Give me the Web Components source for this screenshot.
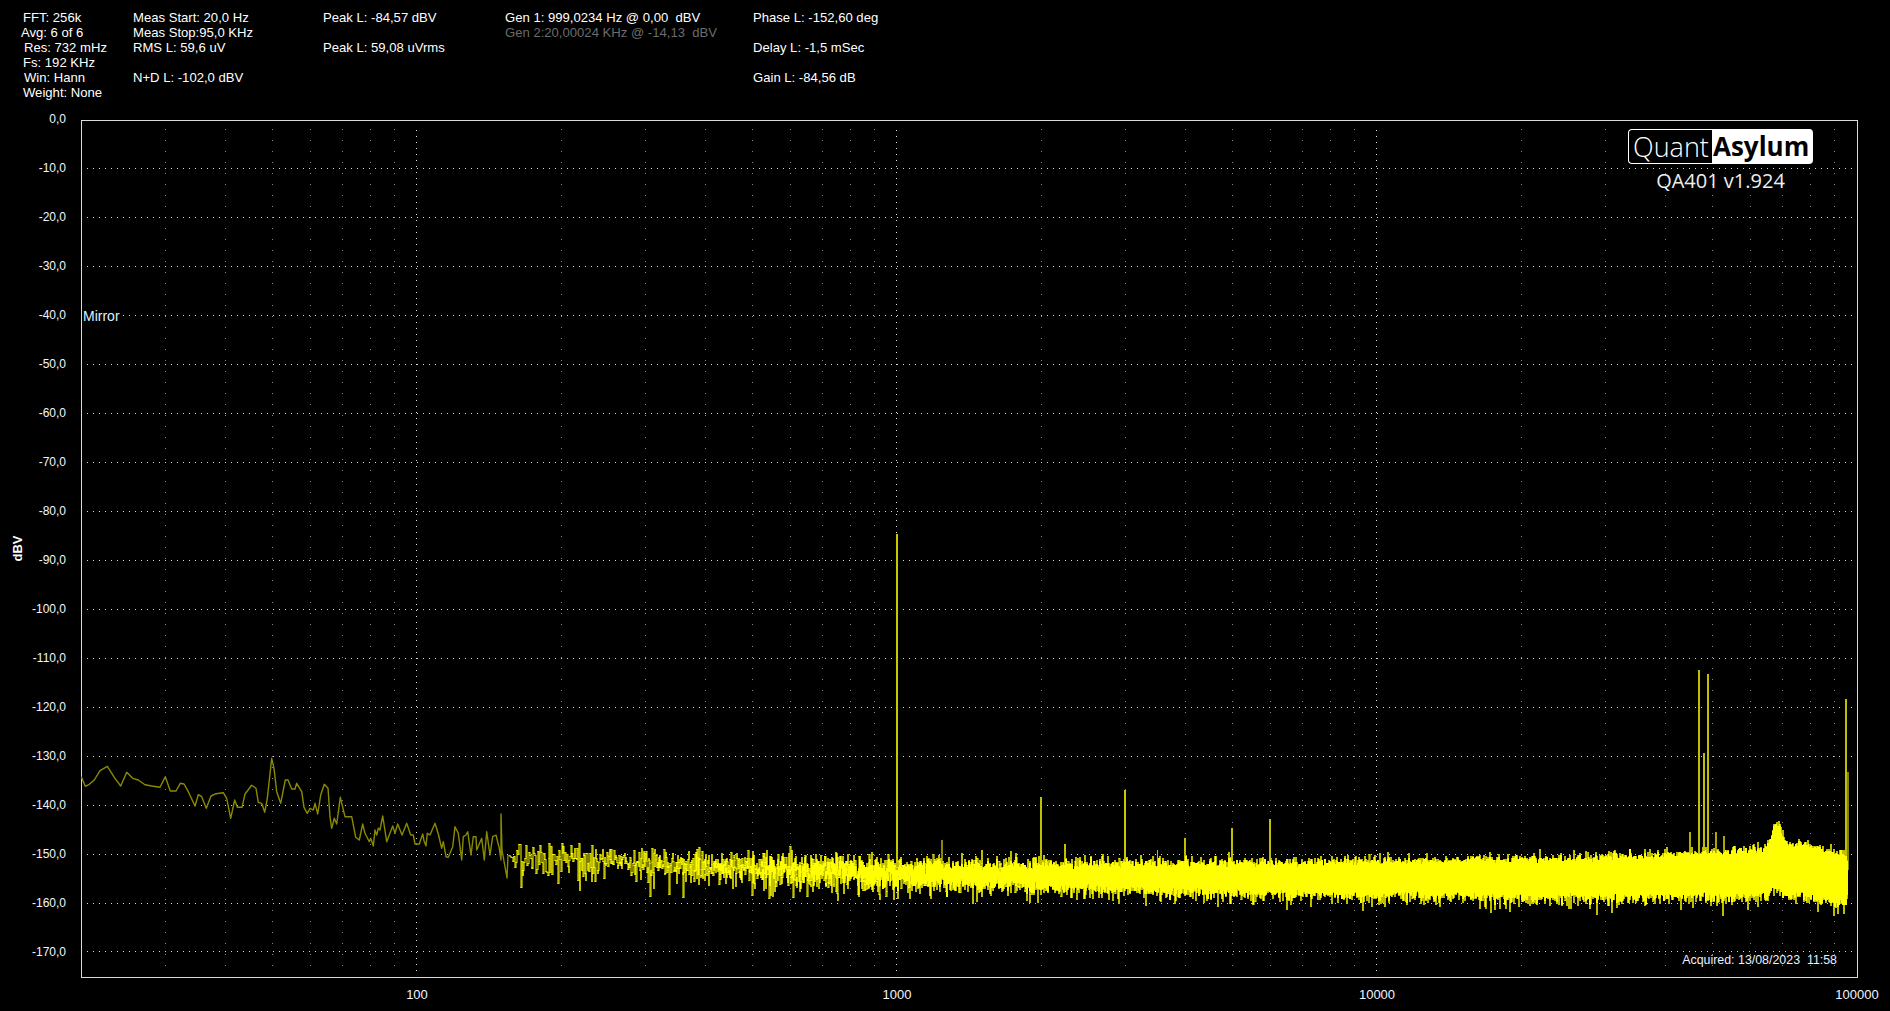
<!DOCTYPE html>
<html lang="en">
<head>
<meta charset="utf-8">
<title>QA401</title>
<style>
  html, body { margin: 0; background: #000; overflow: hidden; }
  body { width: 1890px; height: 1011px; color: #fff; font-family: "Liberation Sans", Arial, sans-serif; }
  .dim { color: #6c6c6c; }
</style>
</head>
<body>
<qa-readouts>
  <qa-column width="112">
    <div style="padding-left:2px">FFT: 256k</div>
    <div>Avg: 6 of 6</div>
    <div style="padding-left:3px">Res: 732 mHz</div>
    <div style="padding-left:2px">Fs: 192 KHz</div>
    <div style="padding-left:3px">Win: Hann</div>
    <div style="padding-left:2px">Weight: None</div>
  </qa-column>
  <qa-column width="190">
    <div>Meas Start: 20,0 Hz</div>
    <div>Meas Stop:95,0 KHz</div>
    <div>RMS L: 59,6 uV</div>
    <div>&nbsp;</div>
    <div>N+D L: -102,0 dBV</div>
  </qa-column>
  <qa-column width="182">
    <div>Peak L: -84,57 dBV</div>
    <div>&nbsp;</div>
    <div>Peak L: 59,08 uVrms</div>
  </qa-column>
  <qa-column width="248">
    <div>Gen 1: 999,0234 Hz @ 0,00  dBV</div>
    <div class="dim">Gen 2:20,00024 KHz @ -14,13  dBV</div>
  </qa-column>
  <qa-column width="200">
    <div>Phase L: -152,60 deg</div>
    <div>&nbsp;</div>
    <div>Delay L: -1,5 mSec</div>
    <div>&nbsp;</div>
    <div>Gain L: -84,56 dB</div>
  </qa-column>
</qa-readouts>
<qa-chart>
  <qa-logo slot="overlay"></qa-logo>
</qa-chart>

<script>
class QaColumn extends HTMLElement {
  constructor() {
    super();
    this.attachShadow({ mode: 'open' });
    this.shadowRoot.innerHTML = `
      <style>
        :host { display: block; flex: none; font-size: 13.1px; line-height: 15px; }
        ::slotted(div) { white-space: pre; }
      </style>
      <slot></slot>
    `;
  }
  connectedCallback() {
    this.style.width = this.getAttribute('width') + 'px';
  }
}
customElements.define('qa-column', QaColumn);

class QaReadouts extends HTMLElement {
  constructor() {
    super();
    this.attachShadow({ mode: 'open' });
    this.shadowRoot.innerHTML = `
      <style>
        :host { display: flex; box-sizing: border-box; height: 120px; padding: 10px 0 0 21px; }
      </style>
      <slot></slot>
    `;
  }
}
customElements.define('qa-readouts', QaReadouts);

class QaLogo extends HTMLElement {
  constructor() {
    super();
    this.attachShadow({ mode: 'open' });
    this.shadowRoot.innerHTML = `
      <style>
        :host { display: flex; flex-direction: column; align-items: center; width: 185px; }
        .mark { display: flex; height: 35px; width: 185px; font-family: "Open Sans", sans-serif; font-size: 26px; line-height: 33px; }
        .quant { box-sizing: border-box; width: 84px; background: #000; color: #fff; font-weight: 300; font-size: 27px;
                 border: 1px solid #fff; border-right: 0; border-radius: 4px 0 0 4px; padding-left: 4px; }
        .asylum { flex: 1; background: #fff; color: #000; font-weight: 700; border-radius: 0 4px 4px 0;
                  padding-left: 1px; line-height: 35px; }
        .version { margin-top: 4px; color: #eee; font-family: "Open Sans", sans-serif; font-size: 20px; line-height: 26px; white-space: nowrap; }
      </style>
      <div class="mark"><span class="quant">Quant</span><span class="asylum">Asylum</span></div>
      <div class="version">QA401 v1.924</div>
    `;
  }
}
customElements.define('qa-logo', QaLogo);

// page coordinates of the plot box, the svg viewBox uses them directly
const LEFT = 81.5, TOP = 120;
const PX_PER_DB = 4.894, PX_PER_DECADE = 480;
const xOf = (f) => LEFT + PX_PER_DECADE * Math.log10(f / 20);
const yOf = (db) => TOP + PX_PER_DB * -db;

function rng(seed) {
  return () => {
    seed |= 0; seed = seed + 0x6D2B79F5 | 0;
    let t = Math.imul(seed ^ seed >>> 15, 1 | seed);
    t = t + Math.imul(t ^ t >>> 7, 61 | t) ^ t;
    return ((t ^ t >>> 14) >>> 0) / 4294967296;
  };
}

function dotsPath() {
  const major = [], minor = [], rows = [];
  for (let db = -10; db >= -170; db -= 10) {
    const y = Math.round(yOf(db) - 0.5);
    for (let x = 87; x < 1852; x += 6) rows.push(`M${x} ${y}h1v1h-1z`);
  }
  for (const decade of [10, 100, 1000, 10000]) {
    for (let k = 1; k <= 9; k++) {
      const f = decade * k;
      if (f <= 20) continue;
      const x = Math.floor(xOf(f) - 0.4);
      if (k === 1) {
        for (let y = 130; y < 972; y += 6) major.push(`M${x} ${y}h1v1h-1z`);
      } else {
        for (let y = 129; y < 970; y += 11) minor.push(`M${x} ${y}h1v1h-1z`);
      }
    }
  }
  return { major: major.join(''), minor: minor.join(''), rows: rows.join('') };
}

// read off the reference: zoomed x,y of the low frequency part of the trace
const LOW = [244,170,256,199,268,193,283,180,300,152,322,139,345,175,362,198,380,157,398,175,415,180,435,194,455,198,480,202,
  496,170,511,213,528,213,541,190,552,192,565,215,585,258,595,224,605,230,619,265,633,228,648,221,670,218,680,235,692,295,
  704,240,712,262,726,262,735,222,755,196,768,205,775,247,785,250,794,277,802,235,815,115,822,145,830,215,842,250,856,180,
  864,180,875,207,885,207,890,190,905,215,912,262,922,280,930,265,940,270,945,250,953,282,962,225,973,193,984,205,990,290,
  995,325,1003,295,1010,312,1021,232,1035,290,1055,290,1067,352,1078,360,1088,312,1095,340,1108,365,1112,355,1120,378,
  1125,330,1130,345,1135,325,1140,330,1148,288,1160,365,1178,318,1185,340,1193,312,1206,345,1220,310,1232,345,1240,345,
  1245,372,1258,372,1268,342,1272,362,1278,378,1282,340,1290,345,1305,310,1315,342,1325,385,1330,365,1338,410,1345,412,
  1358,380,1365,320,1375,340,1385,420,1390,350,1398,345,1403,335,1413,405,1420,350,1428,350,1430,390,1445,355,1453,420,
  1460,335,1470,405,1478,350,1488,345,1498,385];

function lowPath() {
  let d = '';
  for (let i = 0; i < LOW.length; i += 2) {
    d += (i ? 'L' : 'M') + (LOW[i] / 3).toFixed(1) + ' ' + (720 + LOW[i + 1] / 3).toFixed(1);
  }
  return d + 'L501 860L501 814L502 850L507 878L508 855';
}

const XS =    [ 505, 600, 700, 800, 897,1000,1100,1300,1500,1620,1700,1760,1800,1845,1848];
const FLOOR = [ 857, 860, 865, 868, 872, 874, 876, 877, 877, 876, 874, 872, 870, 877, 878];
const LIFT =  [   1,   1,   1,   1,   1,   1,   1,   1,   1,   1, 1.1,1.15, 1.3,1.05,   1];
const DROP =  [   1,   1,   1, .95,  .9,  .8, .78, .75, .72, .72, .72, .72, .75,  .8,  .8];

function lerpTable(table, x) {
  let i = 0;
  while (i < XS.length - 2 && x > XS[i + 1]) i++;
  const t = Math.min(1, Math.max(0, (x - XS[i]) / (XS[i + 1] - XS[i])));
  return table[i] + (table[i + 1] - table[i]) * t;
}

// The trace is 130000 translucent FFT bins on a log axis, so overlap is what makes
// it go from olive to bright yellow. Count the strokes per pixel, then draw the runs.
const BAND_Y0 = 790, BAND_ROWS = 170, BAND_COLS = 1900;
const SHADES = ['#808000', '#bfbf00', '#dfdf00', '#ffff00'];

function bandPaths() {
  const rand = rng(401);
  const hits = new Uint16Array(BAND_COLS * BAND_ROWS);
  const mark = (col, y1, y2) => {
    const a = Math.max(0, Math.round(Math.min(y1, y2)) - BAND_Y0);
    const b = Math.min(BAND_ROWS - 1, Math.round(Math.max(y1, y2)) - BAND_Y0);
    for (let r = a; r <= b; r++) {
      const k = col * BAND_ROWS + r;
      if (hits[k] < 60000) hits[k]++;
    }
  };

  let prevX = 508, prevY = 855;
  for (let i = 215; i * 0.7324 < 95000; i++) {
    const x = xOf(i * 0.7324);
    if (x < 508) continue;
    // power averaged over the 6 acquisitions of the run
    let p = 0;
    for (let n = 0; n < 6; n++) p -= Math.log(1 - rand());
    const db = 10 * Math.log10(p / 6);
    let y = lerpTable(FLOOR, x);
    const hump = Math.exp(-Math.pow((x - 1776) / 6.5, 2));
    if (db > 0) y -= db * PX_PER_DB * lerpTable(LIFT, x) + 24 * hump;
    else y -= db * PX_PER_DB * lerpTable(DROP, x) + 6 * hump;

    const from = Math.floor(prevX), to = Math.floor(x);
    for (let col = from; col <= to; col++) {
      const t = to > from ? (col - from) / (to - from) : 1;
      const prevT = to > from ? Math.max(0, (col - 1 - from) / (to - from)) : 0;
      const y1 = prevY + (y - prevY) * prevT, y2 = prevY + (y - prevY) * t;
      mark(col, y1, y2);
      mark(col + 1, y1, y2);
    }
    prevX = x; prevY = y;
  }

  const paths = SHADES.map(() => []);
  const shadeOf = (n) => Math.min(n, SHADES.length) - 1;
  for (let col = 508; col <= 1849; col++) {
    let start = -1, shade = -1;
    for (let r = 0; r <= BAND_ROWS; r++) {
      const n = r < BAND_ROWS ? hits[col * BAND_ROWS + r] : 0;
      const s = n ? shadeOf(n) : -1;
      if (s !== shade) {
        if (shade >= 0) paths[shade].push(`M${col} ${start + BAND_Y0}h1v${r - start}h-1z`);
        start = r; shade = s;
      }
    }
  }
  return paths.map((p) => p.join(''));
}

const SPIKES = [[897, 534, 2, '#c8c800'], [942, 840, 2, '#8a8a00'], [1041, 797, 2, '#c0c000'], [1065, 844, 2, '#c0c000'],
  [1125, 790, 2, '#c8c800'], [1157, 850, 1, '#c0c000'], [1185, 838, 2, '#c0c000'], [1232, 828, 2, '#c0c000'], [1270, 819, 2, '#c0c000'],
  [1690, 832, 2, '#b0b000'], [1699, 670, 2, '#c0c000'], [1704, 753, 2, '#c0c000'], [1708, 674, 2, '#c0c000'],
  [1716, 832, 2, '#a8a800'], [1724, 836, 2, '#a8a800'], [1848, 772, 2, '#808000'], [1846, 699, 2, '#c0c000']];

class QaChart extends HTMLElement {
  constructor() {
    super();
    this.attachShadow({ mode: 'open' });
    const dots = dotsPath();
    const band = bandPaths().map((d, i) => `<path d="${d}" fill="${SHADES[i]}"/>`).join('');
    const spikes = SPIKES.map(([x, y, w, c]) => `<path d="M${x} ${y}V870" stroke="${c}" stroke-width="${w}" fill="none"/>`).join('');
    const yLabels = [];
    for (let db = 0; db >= -170; db -= 10) yLabels.push(`<span>${db === 0 ? '0,0' : db + ',0'}</span>`);
    this.shadowRoot.innerHTML = `
      <style>
        :host { display: grid; grid-template-columns: 81px 1777px; grid-template-rows: 858px 34px; }
        .y-axis { position: relative; display: flex; align-items: center; justify-content: center; }
        .unit { font-size: 13px; font-weight: bold; transform: rotate(-90deg); width: 35px; text-align: center; margin-right: 46px; margin-top: -2px; }
        .ticks { position: absolute; right: 15px; top: -24.7px; display: flex; flex-direction: column; align-items: flex-end;
                 font-size: 12px; color: #f2f6ff; }
        .ticks span { height: 48.98px; line-height: 48.98px; }
        .plot { position: relative; }
        svg { display: block; }
        .mirror { position: absolute; left: 2px; top: 188px; background: #000; color: #dff0ff; font-size: 14px; line-height: 17px; padding-right: 2px; }
        .acquired { position: absolute; right: 21px; bottom: 11px; color: #eaf2ff; font-size: 12.4px; line-height: 14px; white-space: pre; }
        .brand { position: absolute; right: 45px; top: 9px; }
        .x-axis { grid-column: 2; display: flex; gap: 420px; padding: 9px 0 0 306px; font-size: 13px; line-height: 16px; color: #f2f6ff; }
        .x-axis span { flex: none; width: 60px; text-align: center; }
      </style>
      <div class="y-axis">
        <div class="unit">dBV</div>
        <div class="ticks">${yLabels.join('')}</div>
      </div>
      <div class="plot">
        <svg width="1777" height="858" viewBox="81 120 1777 858">
          <g shape-rendering="crispEdges">
            <path d="${dots.minor}" fill="#858585"/>
            <path d="${dots.major}" fill="#e0e0e0"/>
            <path d="${dots.rows}" fill="#d8d8d8"/>
            <rect x="81.5" y="120.5" width="1776" height="857" fill="none" stroke="#dcdcdc"/>
          </g>
          <path d="${lowPath()}" fill="none" stroke="#8a8a00" stroke-width="1.4" stroke-linejoin="round"/>
          <g shape-rendering="crispEdges">
            ${spikes}
            ${band}
          </g>
        </svg>
        <div class="mirror">Mirror</div>
        <div class="acquired">Acquired: 13/08/2023  11:58</div>
        <div class="brand"><slot name="overlay"></slot></div>
      </div>
      <div class="x-axis"><span>100</span><span>1000</span><span>10000</span><span>100000</span></div>
    `;
  }
}
customElements.define('qa-chart', QaChart);
</script>
</body>
</html>
